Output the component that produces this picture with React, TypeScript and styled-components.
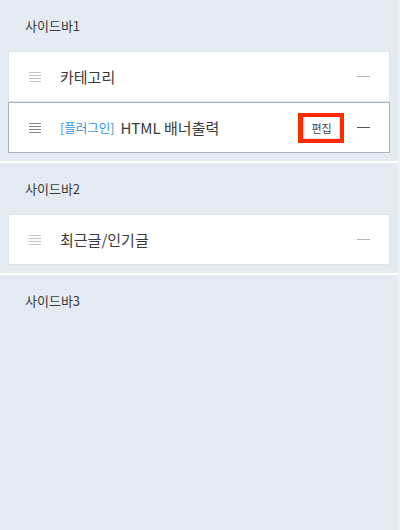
import React from "react";
import styled, { createGlobalStyle } from "styled-components";

const Global = createGlobalStyle`
  html, body { margin: 0; padding: 0; background: #eef2f7; }
  body { font-family: "Noto Sans CJK KR", "Noto Sans", sans-serif; }
`;

const Page = styled.div`
  width: 398px;
  height: 530px;
  display: flex;
  flex-direction: column;
  gap: 2px;
  background: #ffffff;
`;

const Section = styled.section<{ $grow?: boolean }>`
  background: #e5ebf2;
  padding: 0 8px 8px;
  flex: ${(p) => (p.$grow ? "1" : "none")};
`;

const Heading = styled.div`
  height: 51px;
  display: flex;
  align-items: center;
  padding-left: 17px;
  font-size: 13px;
  color: #3a3a3a;
`;

const List = styled.div`
  display: flex;
  flex-direction: column;
`;

const Card = styled.div<{ $active?: boolean }>`
  box-sizing: border-box;
  height: 51px;
  background: #fff;
  border: 1px solid ${(p) => (p.$active ? "#a7b2bf" : "#e0e5eb")};
  display: flex;
  align-items: center;
  padding: 0 19px 0 20px;
`;

const Grip = styled.span<{ $active?: boolean }>`
  width: 12px;
  display: flex;
  flex-direction: column;
  gap: 2px;
  margin-right: 19px;
  & > i {
    display: block;
    height: 1px;
    background: ${(p) => (p.$active ? "#8a8a8a" : "#c4c4c4")};
  }
`;

const Title = styled.span`
  flex: 1;
  font-size: 15px;
  color: #3a3a3a;
  display: flex;
  align-items: center;
  gap: 6px;
`;

const Tag = styled.span`
  font-size: 12.5px;
  color: #3a93d8;
`;

const EditHighlight = styled.span`
  border: 4px solid #ff2a00;
  border-left-width: 5px;
  margin-right: 13px;
  display: flex;
`;

const EditButton = styled.button`
  box-sizing: border-box;
  width: 37px;
  height: 22px;
  border: 1px solid #fff;
  border-right-color: #dcdcdc;
  border-bottom-color: #e4e4e4;
  background: #fff;
  font-family: inherit;
  font-size: 11px;
  color: #444;
  padding: 0;
`;

const Remove = styled.span<{ $active?: boolean }>`
  width: 13px;
  height: 1px;
  background: ${(p) => (p.$active ? "#555" : "#b5b5b5")};
`;

type Item = { title: string; tag?: string; active?: boolean };

const Row = ({ title, tag, active }: Item) => (
  <Card $active={active}>
    <Grip $active={active}>
      <i />
      <i />
      <i />
      <i />
    </Grip>
    <Title>
      {tag && <Tag>{tag}</Tag>}
      {title}
    </Title>
    {active && (
      <EditHighlight>
        <EditButton>편집</EditButton>
      </EditHighlight>
    )}
    <Remove $active={active} />
  </Card>
);

const sections: { name: string; items: Item[] }[] = [
  {
    name: "사이드바1",
    items: [
      { title: "카테고리" },
      { title: "HTML 배너출력", tag: "[플러그인]", active: true },
    ],
  },
  { name: "사이드바2", items: [{ title: "최근글/인기글" }] },
  { name: "사이드바3", items: [] },
];

export default function App() {
  return (
    <>
      <Global />
      <Page>
        {sections.map((s, i) => (
          <Section key={s.name} $grow={i === sections.length - 1}>
            <Heading>{s.name}</Heading>
            <List>
              {s.items.map((it) => (
                <Row key={it.title} {...it} />
              ))}
            </List>
          </Section>
        ))}
      </Page>
    </>
  );
}
